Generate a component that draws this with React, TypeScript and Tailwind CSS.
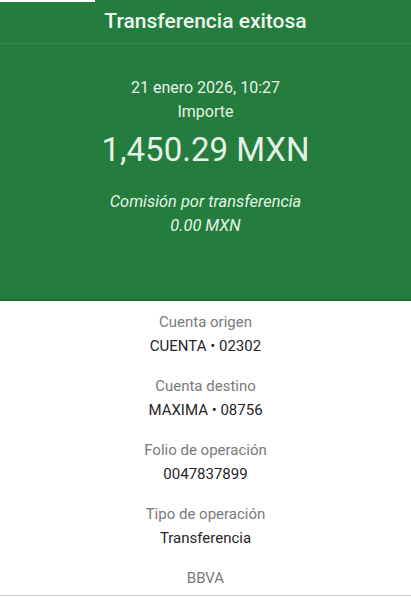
export default function App() {
  const rows = [
    { label: "Cuenta origen", value: "CUENTA • 02302" },
    { label: "Cuenta destino", value: "MAXIMA • 08756" },
    { label: "Folio de operación", value: "0047837899" },
    { label: "Tipo de operación", value: "Transferencia" },
  ];

  return (
    <div className="w-[411px] h-[597px] bg-white font-['Roboto',sans-serif] overflow-hidden relative">
      <div className="absolute left-0 top-0 w-[95px] h-[2px] bg-white" />
      <div className="bg-[#247c3e] h-[301px] border-b-2 border-[#1f6d36]">
        <div className="h-[44px] flex items-center justify-center border-b border-[#2f8a4a]">
          <h1 className="text-[21px] font-medium text-[#eef8ee]">Transferencia exitosa</h1>
        </div>
        <div className="flex flex-col items-center text-[#e4f3e4] pt-[32px]">
          <p className="text-[16px] leading-[24px]">21 enero 2026, 10:27</p>
          <p className="text-[16px] leading-[24px]">Importe</p>
          <p className="text-[33px] leading-[48px] mt-[2px]">1,450.29 MXN</p>
          <p className="text-[16.4px] leading-[24px] italic mt-[16px]">Comisión por transferencia</p>
          <p className="text-[16.4px] leading-[24px] italic">0.00 MXN</p>
        </div>
      </div>
      <div className="flex flex-col items-center pt-[9px]">
        {rows.map((r) => (
          <div key={r.label} className="flex flex-col items-center h-[64px]">
            <p className="text-[15px] leading-[24px] text-[#7a7a7a]">{r.label}</p>
            <p className="text-[15px] leading-[24px] text-[#262626]">{r.value}</p>
          </div>
        ))}
        <p className="text-[15px] leading-[24px] text-[#7a7a7a]">BBVA</p>
      </div>
      <div className="absolute left-0 bottom-[1px] w-full h-[1px] bg-[#d0d0d0]" />
    </div>
  );
}
